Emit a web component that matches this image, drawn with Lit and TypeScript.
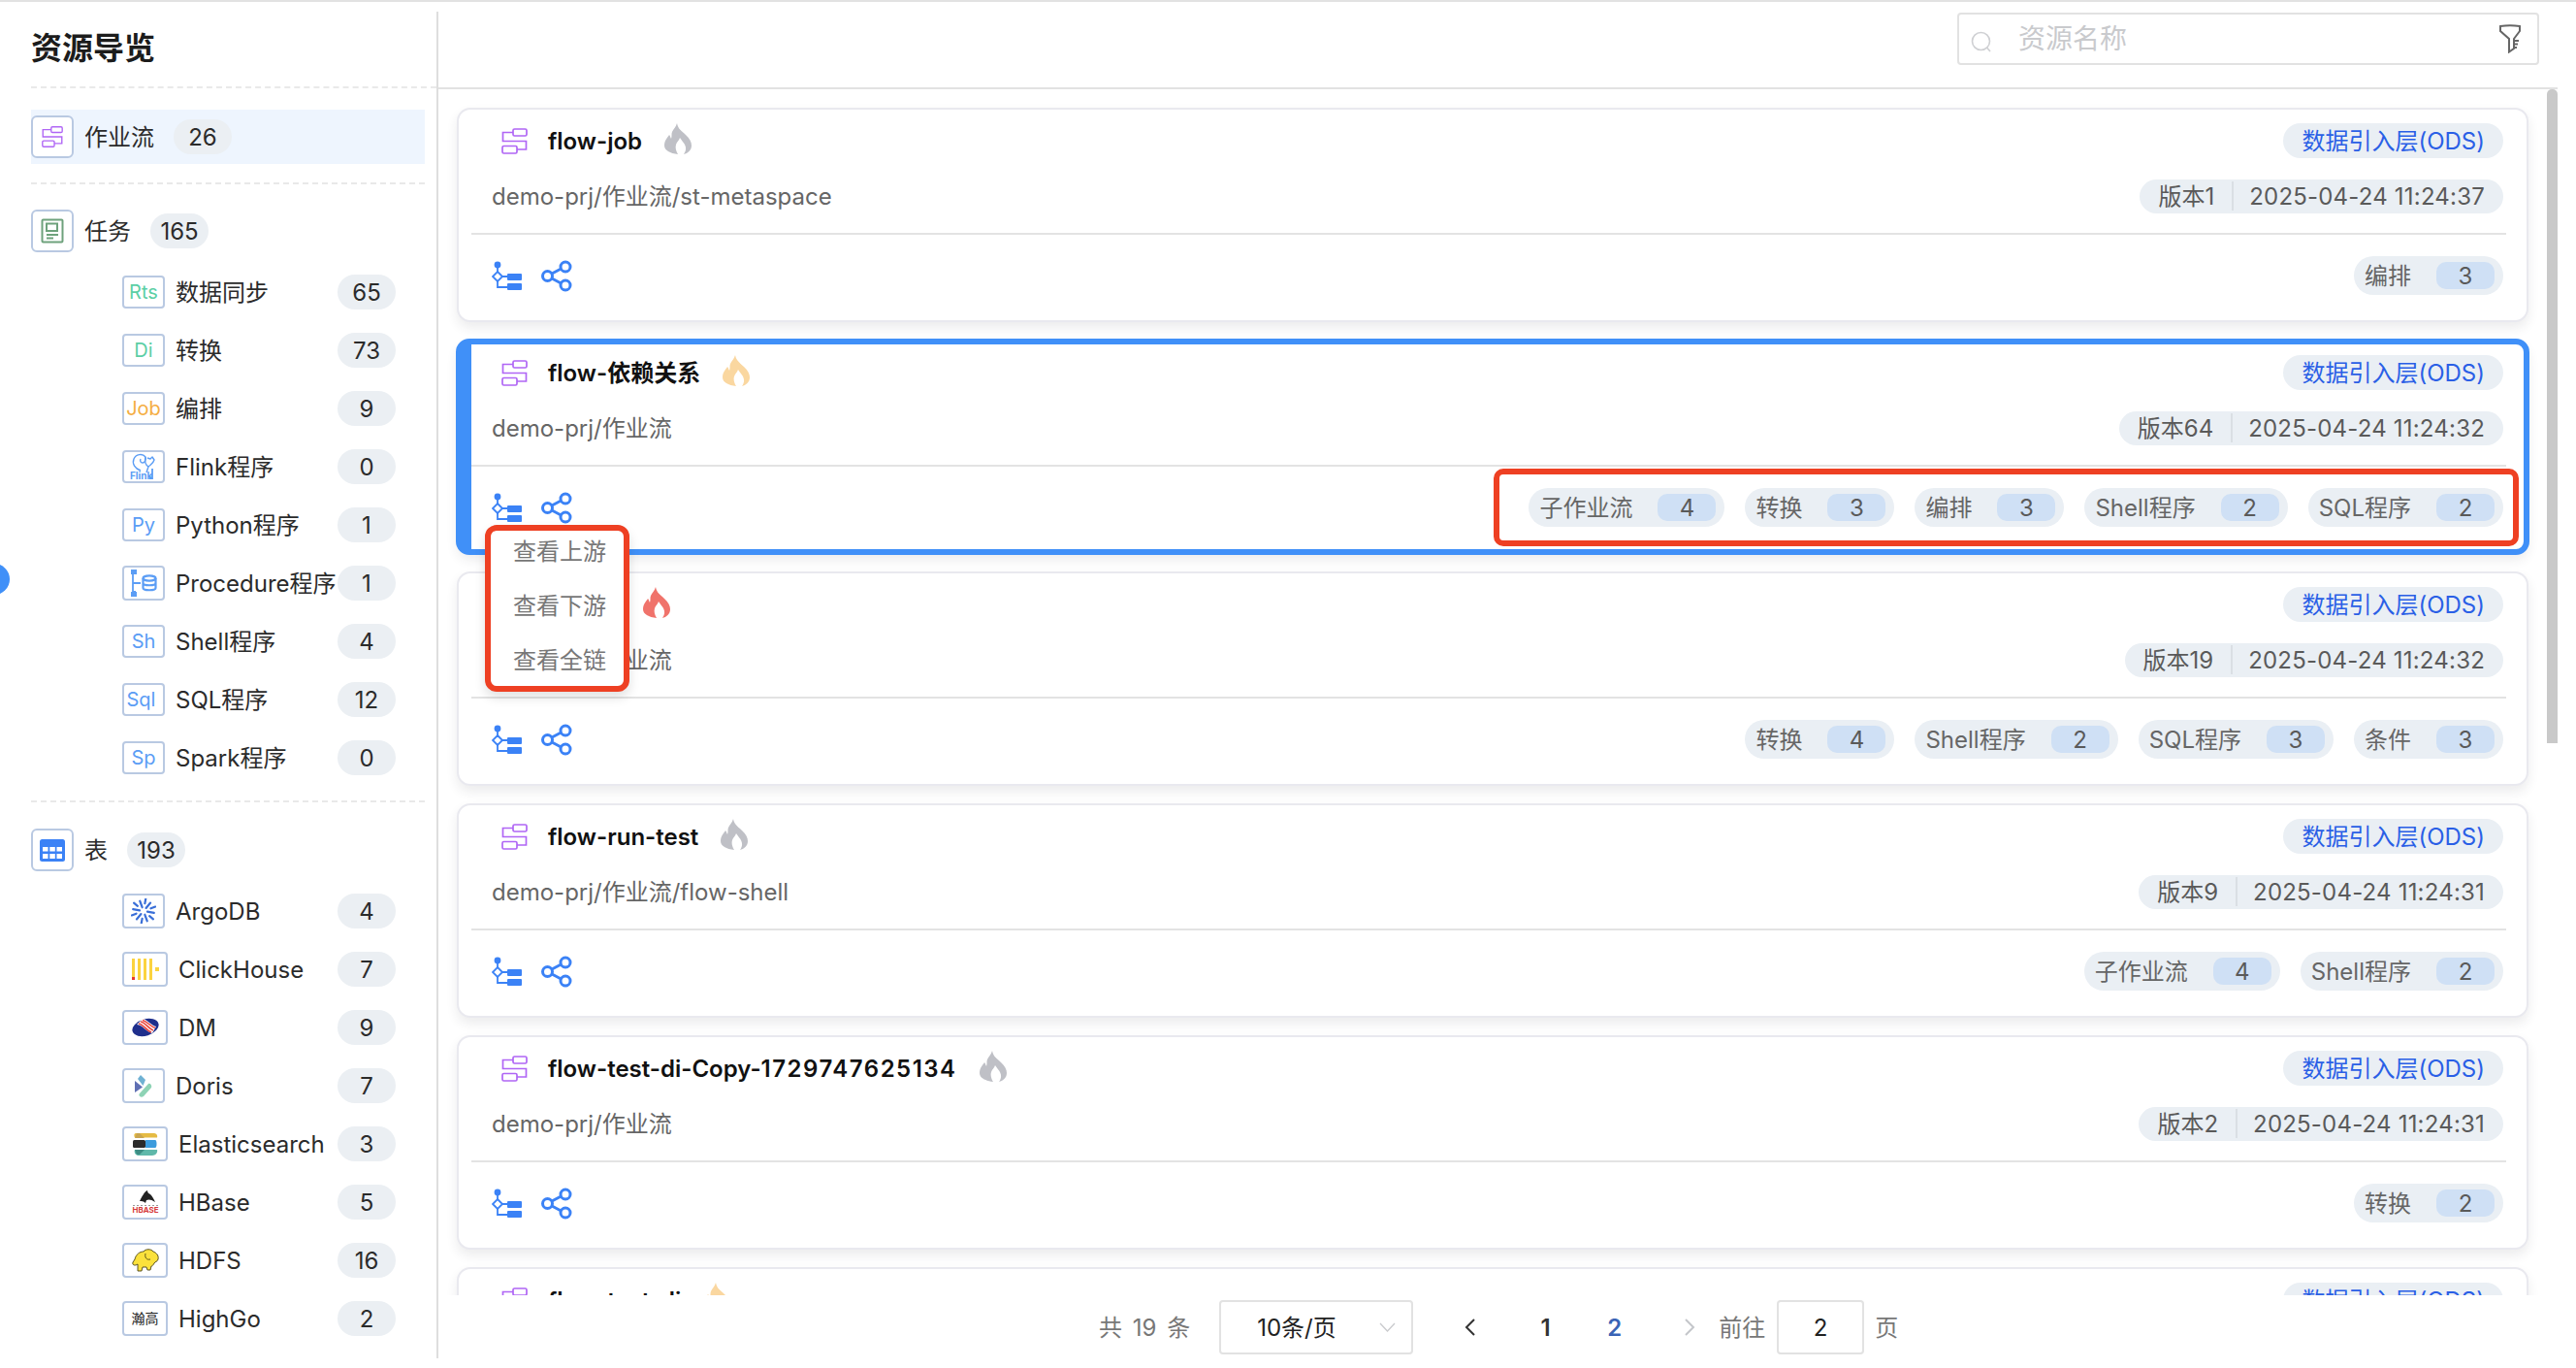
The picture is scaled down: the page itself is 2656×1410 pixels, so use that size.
import { LitElement, html, css, svg } from "lit";
import { customElement } from "lit/decorators.js";

const flowIcon = (s: number) => html`<svg class="flow" width=${s} height=${s} viewBox="0 0 27 27" fill="none" stroke="#b066f5" stroke-width="1.700"><rect x="12" y="1" width="14" height="7" rx="1.500"/><path d="M12 4.500H1.500V13.500H25.500V22H16"/><rect x="1" y="18.500" width="15" height="7.500" rx="1.500"/></svg>`;
const flame = (c: string) => html`<svg class="flame" width="28" height="32" viewBox="0 0 28 32"><path fill=${c} d="M13 0c1 6 5 8 9 12c4 4 6 7 6 11c0 5-4 8-8 9c2-3 3-6 1-10c-1-2-3-4-5-7c-1 3-3 4-4 7c-1 3 0 7 2 10c-8-1-14-4-14-9c0-5 3-8 5-11c1 1 1 2 2 4c1-3 0-5 1-7c1-3 4-5 5-9z"/></svg>`;
const tree = html`<svg width="31" height="30" viewBox="0 0 31 30" fill="none" stroke="#3b82f6" stroke-width="1.800"><circle cx="6" cy="4" r="3.400" fill="#3b82f6" stroke="none"/><path d="M6 6V11M6 21V27H16M11 16H16"/><path d="M6 11L11 16L6 21L1 16Z"/><rect x="16" y="13" width="15" height="7" rx="1" fill="#3b82f6" stroke="none"/><rect x="16" y="23" width="15" height="7" rx="1" fill="#3b82f6" stroke="none"/></svg>`;
const share = html`<svg width="32" height="33" viewBox="0 0 32 33" fill="none" stroke="#3b82f6" stroke-width="3"><circle cx="25" cy="7" r="5"/><circle cx="6.500" cy="16.500" r="5"/><circle cx="25" cy="26" r="5"/><path d="M11 14L20.500 9M11 19L20.500 24"/></svg>`;

const boxIcons: Record<string, unknown> = {
  flow: flowIcon(22),
  task: html`<svg width="24" height="26" viewBox="0 0 24 26" fill="none" stroke="#6ea27c" stroke-width="2"><rect x="1.500" y="1.500" width="21" height="23" rx="1"/><rect x="6" y="5.500" width="11" height="7.500"/><path d="M6 17H18M6 20.500H13"/></svg>`,
  table: html`<svg width="26" height="23" viewBox="0 0 26 23"><rect width="26" height="23" rx="2.500" fill="#3b82f6"/><g fill="#fff"><rect x="3" y="8" width="5.500" height="4.500"/><rect x="10.300" y="8" width="5.500" height="4.500"/><rect x="17.500" y="8" width="5.500" height="4.500"/><rect x="3" y="15" width="5.500" height="5"/><rect x="10.300" y="15" width="5.500" height="5"/><rect x="17.500" y="15" width="5.500" height="5"/></g></svg>`,
  flink: html`<svg width="36" height="30" viewBox="0 0 36 30"><g fill="none" stroke="#5b9df5" stroke-width="1.400" stroke-linejoin="round"><path d="M15 19C9 17 6 12 8 7C10 2 17 1 20 5C21 8 19 11 17 11C15 11 14 9 15 7"/><path d="M20 5C19 9 20 13 23 15L21 21M23 15C25 13 28 12 29 8L27 5L25 7L22 6"/></g><text x="4" y="28" font-size="10" font-weight="700" fill="#5b9df5" font-family="Inter">Flink</text><path d="M27 17V27H24" fill="none" stroke="#5b9df5" stroke-width="1.800"/></svg>`,
  proc: html`<svg width="28" height="28" viewBox="0 0 28 28" fill="#5b9df5"><rect x="1" y="0" width="6" height="5"/><rect x="1" y="23" width="6" height="5"/><path d="M3 5V23H6M3 14H11" fill="none" stroke="#5b9df5" stroke-width="1.800"/><g fill="none" stroke="#5b9df5" stroke-width="2.200"><ellipse cx="20" cy="9" rx="6.500" ry="2.600"/><path d="M13.500 9V19C13.500 22 26.500 22 26.500 19V9M13.500 14C13.500 17 26.500 17 26.500 14"/></g></svg>`,
  argo: html`<svg width="26" height="26" viewBox="0 0 26 26" stroke="#3a6fd8" stroke-width="2.200" stroke-linecap="round">${[10, 40, 70, 100, 130, 160, 190, 220, 250, 280, 310, 340].map((a, i) => {
    const r = (a * Math.PI) / 180;
    const o = i % 2 ? 13 : 11;
    const n = i % 2 ? 8 : 4;
    return svg`<line x1=${13 + Math.cos(r) * n} y1=${13 + Math.sin(r) * n} x2=${13 + Math.cos(r) * o} y2=${13 + Math.sin(r) * o}/>`;
  })}</svg>`,
  click: html`<svg width="30" height="23" viewBox="0 0 30 23" fill="#fbd33f"><rect x="1" width="3" height="22"/><rect x="7" width="3" height="22"/><rect x="13" width="3" height="22"/><rect x="19" width="3" height="22"/><rect x="25" y="9" width="4" height="4"/><rect x="1" y="19" width="3" height="3" fill="#e8382c"/></svg>`,
  dm: html`<svg width="28" height="22" viewBox="0 0 28 22"><ellipse cx="14" cy="11" rx="14" ry="8.500" transform="rotate(-17 14 11)" fill="#1f2f8c"/><path d="M5 8C12 9 14 15 21 17L25 10C20 9 16 3 11 2Z" fill="#fff"/><g fill="none" stroke="#e8453c" stroke-width="1.600"><path d="M7 7C12 8 15 14 20 16M9 5C14 6 17 12 22 14M11 3.500C16 5 19 10 24 11.500"/></g></svg>`,
  doris: html`<svg width="18" height="23" viewBox="0 0 18 23"><path d="M0 6L8 12.500L0 18Z" fill="#5f6fb3"/><path d="M3 4L6 0L11 5L8.500 11Z" fill="#6fb1d3"/><path d="M5 19L14 9C16 8 18 11 17 13L9 22C6 24 3 21 5 19Z" fill="#8ed3b5"/></svg>`,
  es: html`<svg width="26" height="24" viewBox="0 0 26 24"><path d="M3 1H21A3.500 3.500 0 0 1 25 5.500H2C1 4 1 1 3 1Z" fill="#e5bb44"/><path d="M2 6H12L7 1H4Z" fill="#c9a54f"/><rect y="8" width="13" height="8" rx="1.500" fill="#2b2b2b"/><path d="M13 8H23C25 8 25 16 23 16H13Z" fill="#3b9bdc"/><path d="M2 18H25C26 21 23 24 20 24H5C2 23 1 20 2 18Z" fill="#5fb8aa"/><path d="M2 18H12L7 23H4Z" fill="#3e8d84"/></svg>`,
  hbase: html`<svg width="28" height="24" viewBox="0 0 28 24"><path d="M8 11C10 7 13 1 16 0C16 2 17 3 19 4C21 6 22 8 24 12C20 9 17 9 15 10L14 13C12 11 10 11 8 11Z" fill="#222"/><path d="M1 15.500H27" stroke="#999" stroke-width="1" stroke-dasharray="2 2"/><text x="14" y="23" text-anchor="middle" font-size="7.500" font-weight="700" fill="#d63a3a" font-family="Inter" textLength="27" lengthAdjust="spacingAndGlyphs">HBASE</text></svg>`,
  hdfs: html`<svg width="28" height="24" viewBox="0 0 28 24"><path d="M3 11C4 6 8 3 12 3C14 0 20 0 22 3C25 4 28 7 27 11C26 14 24 13 23 15C22 17 21 18 20 18L19 22H16L15 19H11L10 23H6L6 16C3 18 0 17 1 14Z" fill="#fbe13c" stroke="#4a4314" stroke-width=".9"/><path d="M14 5C13 9 15 12 19 11" fill="none" stroke="#4a4314" stroke-width=".9"/></svg>`,
  high: html`<span class="hg">瀚高</span>`,
};

const children1 = [
  ["Rts", "数据同步", 65, "#5ccfa5"], ["Di", "转换", 73, "#5ccfa5"], ["Job", "编排", 9, "#f5ae42"],
  ["@flink", "Flink程序", 0, ""], ["Py", "Python程序", 1, "#5b9df5"], ["@proc", "Procedure程序", 1, ""],
  ["Sh", "Shell程序", 4, "#5b9df5"], ["Sql", "SQL程序", 12, "#5b9df5"], ["Sp", "Spark程序", 0, "#5b9df5"],
] as const;
const children2 = [
  ["argo", "ArgoDB", 4, ""], ["click", "ClickHouse", 7, "wide"], ["dm", "DM", 9, "wide"], ["doris", "Doris", 7, ""],
  ["es", "Elasticsearch", 3, "wide"], ["hbase", "HBase", 5, "wide"], ["hdfs", "HDFS", 16, "wide"], ["high", "HighGo", 2, "wide"],
] as const;

const cards = [
  { t: "flow-job", n: "", f: "#bfc0c6", p: "demo-prj/作业流/st-metaspace", v: "版本1", d: "2025-04-24 11:24:37", c: [["编排", 3]] },
  { t: "flow-依赖关系", n: "", f: "#fad7a0", p: "demo-prj/作业流", v: "版本64", d: "2025-04-24 11:24:32", c: [["子作业流", 4], ["转换", 3], ["编排", 3], ["Shell程序", 2], ["SQL程序", 2]], active: true },
  { t: "flow-a", n: "", f: "#f0736b", p: "demo-prj/作业流", v: "版本19", d: "2025-04-24 11:24:32", c: [["转换", 4], ["Shell程序", 2], ["SQL程序", 3], ["条件", 3]] },
  { t: "flow-run-test", n: "", f: "#bfc0c6", p: "demo-prj/作业流/flow-shell", v: "版本9", d: "2025-04-24 11:24:31", c: [["子作业流", 4], ["Shell程序", 2]] },
  { t: "flow-test-di-Copy-", n: "1729747625134", f: "#bfc0c6", p: "demo-prj/作业流", v: "版本2", d: "2025-04-24 11:24:31", c: [["转换", 2]] },
  { t: "flow-test-di", n: "", f: "#fad7a0", p: "demo-prj/作业流", v: "版本1", d: "2025-04-24 11:24:31", c: [["转换", 2]] },
];

@customElement("app-root")
export class AppRoot extends LitElement {
  static styles = css`
    :host { display: block; font-family: Inter, "Noto Sans CJK SC", sans-serif; font-size: 24px; line-height: 31px; color: #2b2b2b; background: #fff; }
    * { box-sizing: border-box; }
    .app { position: relative; display: flex; width: 2656px; height: 1410px; border-top: 2px solid #e2e2e2; overflow: hidden; }
    .dot { position: absolute; left: -22px; top: 579px; width: 32px; height: 32px; border-radius: 50%; background: #4090f8; }
    .side { width: 452px; height: 1388px; margin-top: 10px; flex: none; border-right: 2px solid #dedede; padding: 0 12px 0 32px; }
    .title { height: 79px; margin-right: -12px; padding-top: 16px; font-size: 32px; font-weight: 700; line-height: 44px; color: #1c1c1c; border-bottom: 2px dashed #e9e9e9; }
    .sel { display: flex; align-items: center; height: 56px; margin-top: 22px; background: #eef5fe; }
    .sep { border-top: 2px dashed #e9e9e9; }
    .sep.a { margin-top: 19px; }
    .sep.b { margin-top: 14px; }
    .head { display: flex; align-items: center; height: 44px; }
    .head.a { margin-top: 26px; }
    .head.b { margin-top: 27px; }
    .kids { margin-top: 11px; }
    .row { display: flex; align-items: center; height: 60px; padding: 0 30px 0 94px; }
    .ib { flex: none; display: flex; align-items: center; justify-content: center; width: 44px; height: 44px; border: 2px solid #b9c9e2; border-radius: 6px; background: #fff; font-size: 20px; overflow: hidden; }
    .row .ib { height: 34px; border-radius: 4px; }
    .row .ib.tall { height: 36px; }
    .row .ib.wide { width: 47px; }
    .row .ib.Sql { padding-right: 5px; }
    .label { margin-left: 11px; white-space: nowrap; }
    .num { flex: none; display: flex; align-items: center; justify-content: center; width: 60px; height: 36px; border-radius: 18px; background: #ebeff3; }
    .head .num, .sel .num { margin-left: 20px; }
    .row .num { margin-left: auto; }
    .hg { font-size: 14px; color: #222; line-height: 1; white-space: nowrap; }
    .main { position: relative; flex: none; width: 2185px; display: flex; flex-direction: column; }
    .top { flex: none; height: 90px; padding: 11px 19px 0 0; display: flex; justify-content: flex-end; border-bottom: 2px solid #e2e2e2; }
    .search { display: flex; align-items: center; width: 600px; height: 54px; padding: 0 16px 0 12px; border: 2px solid #e2e2e2; border-radius: 4px; }
    .search .mag { margin-top: 5px; }
    .ph { flex: 1; margin-left: 27px; font-size: 28px; color: #c9cacd; }
    .list { position: relative; flex: none; height: 1243px; overflow: hidden; padding: 19px 0 0 19px; display: flex; flex-direction: column; gap: 18px; }
    .thumb { position: absolute; right: 0; top: 90px; width: 11px; height: 674px; border-radius: 5px 5px 0 0; background: #c9c9c9; }
    .card { position: relative; flex: none; width: 2136px; height: 221px; border: 2px solid #e9e9ef; border-radius: 14px; padding: 14px 24px 0 34px; background: #fff; box-shadow: 0 6px 12px rgba(40, 44, 60, 0.09); }
    .card.on { z-index: 2; }
    .card.on::after { content: ""; position: absolute; inset: -3px; border: 6px solid #4090f8; border-left-width: 16px; border-radius: 14px; pointer-events: none; }
    .r1, .r2 { display: flex; align-items: center; justify-content: space-between; }
    .r1 { height: 36px; }
    .r2 { height: 36px; margin-top: 21px; color: #666; }
    .name { display: flex; align-items: center; padding-left: 10px; font-weight: 600; color: #111; }
    .name > span { margin: 0 23px 0 21px; }
    .digits { letter-spacing: 1.5px; }
    .flame { margin-top: -4px; }
    .tag { display: flex; align-items: center; height: 36px; padding: 0 19px; border-radius: 18px; background: #eaeff4; white-space: nowrap; }
    .ods { color: #2a5fe6; }
    .ver { height: 35px; color: #5a5a5a; }
    .ver i { width: 2px; height: 30px; margin: 0 16px 0 18px; background: #dadfe4; }
    .date { letter-spacing: 0.2px; }
    .rule { height: 2px; margin: 20px -3px 0 -21px; background: #e3e3e3; }
    .foot { display: flex; align-items: center; justify-content: space-between; height: 84px; }
    .tools { display: flex; align-items: center; gap: 20px; }
    .chips { display: flex; gap: 21px; }
    .chip { display: flex; align-items: center; height: 40px; padding: 0 9px 0 11px; border-radius: 20px; background: #eaeff4; color: #666; white-space: nowrap; }
    .chip b { display: flex; align-items: center; justify-content: center; width: 60px; height: 28px; margin-left: 26px; border-radius: 10px; background: #cfe0f5; font-weight: 400; color: #5a5a5a; }
    .mark { position: absolute; left: 1067px; top: 131px; width: 1057px; height: 80px; border: 6px solid #ee4023; border-radius: 10px; z-index: 3; }
    .menu { position: absolute; left: 27px; top: 189px; width: 149px; height: 172px; z-index: 4; display: flex; flex-direction: column; justify-content: center; padding: 0 0 4px 23px; background: #fff; border: 6px solid #ee4023; border-radius: 12px; color: #777; box-shadow: 0 6px 12px rgba(0, 0, 0, 0.12); }
    .menu div { flex: none; height: 56px; line-height: 56px; white-space: nowrap; }
    .pager { display: flex; align-items: center; height: 56px; margin-top: 5px; padding-left: 681px; color: #777; white-space: pre; }
    .total { word-spacing: 4px; }
    .select { display: flex; align-items: center; width: 200px; height: 56px; margin-left: 30px; padding: 0 16px 0 37px; border: 2px solid #e2e2e2; border-radius: 4px; color: #222; }
    .select span { flex: 1; }
    .arrow { display: flex; align-items: center; justify-content: center; width: 42px; }
    .arrow.prev { margin: 0 21px 0 38px; }
    .arrow.next { margin: 0 9px 0 21px; }
    .pg { width: 71px; text-align: center; font-weight: 600; color: #333; }
    .pg.cur { color: #3a63b5; }
    .go { display: flex; align-items: center; justify-content: center; width: 90px; height: 56px; margin: 0 11px 0 12px; border: 2px solid #e2e2e2; border-radius: 4px; color: #222; }
  `;

  private box(k: string, cls = "") {
    return html`<div class="ib ${cls}">${boxIcons[k]}</div>`;
  }

  private card(c: (typeof cards)[number]) {
    return html`<div class="card ${c.active ? "on" : ""}">
      <div class="r1"><div class="name">${flowIcon(27)}<span>${c.t}<span class="digits">${c.n}</span></span>${flame(c.f)}</div><div class="tag ods">数据引入层(ODS)</div></div>
      <div class="r2"><div>${c.p}</div><div class="tag ver">${c.v}<i></i><span class="date">${c.d}</span></div></div>
      <div class="rule"></div>
      <div class="foot"><div class="tools">${tree}${share}</div><div class="chips">${c.c.map((x) => html`<div class="chip">${x[0]}<b>${x[1]}</b></div>`)}</div></div>
      ${c.active ? html`<div class="mark"></div><div class="menu"><div>查看上游</div><div>查看下游</div><div>查看全链</div></div>` : ""}
    </div>`;
  }

  render() {
    return html`<div class="app">
      <div class="dot"></div>
      <aside class="side">
        <div class="title">资源导览</div>
        <div class="sel">${this.box("flow")}<span class="label">作业流</span><span class="num">26</span></div>
        <div class="sep a"></div>
        <div class="head a">${this.box("task")}<span class="label">任务</span><span class="num">165</span></div>
        <div class="kids">${children1.map((k) => {
          const icon = String(k[0]);
          const isSvg = icon.startsWith("@");
          const key = icon.slice(1);
          return html`<div class="row">
            ${isSvg
              ? this.box(key, key === "proc" ? "tall" : "")
              : html`<div class="ib ${icon}" style="color:${k[3]}">${icon}</div>`}
            <span class="label">${k[1]}</span><span class="num">${k[2]}</span>
          </div>`;
        })}</div>
        <div class="sep b"></div>
        <div class="head b">${this.box("table")}<span class="label">表</span><span class="num">193</span></div>
        <div class="kids">${children2.map((k) => html`<div class="row">${this.box(k[0], `tall ${k[3]}`)}<span class="label">${k[1]}</span><span class="num">${k[2]}</span></div>`)}</div>
      </aside>
      <main class="main">
        <div class="top"><div class="search">
          <svg class="mag" width="22" height="22" viewBox="0 0 22 22" fill="none" stroke="#cfd0d3" stroke-width="1.600"><circle cx="10.500" cy="10.500" r="9"/><path d="M16.500 17L20 21"/></svg>
          <span class="ph">资源名称</span>
          <svg width="24" height="30" viewBox="0 0 24 30" fill="none" stroke="#666" stroke-width="2"><path d="M2 2C8 1 16 1 22 2V7L16 15V25L11 28.500V15L2 7Z"/><path d="M16 17H21M16 20.500H20M16 24H19"/></svg>
        </div></div>
        <div class="list">${cards.map((c) => this.card(c))}</div>
        <div class="thumb"></div>
        <div class="pager">
          <span class="total">共 19 条</span>
          <div class="select"><span>10条/页</span><svg width="17" height="10" viewBox="0 0 17 10" fill="none" stroke="#c9cacd" stroke-width="1.300"><path d="M1 1L8.500 9L16 1"/></svg></div>
          <div class="arrow prev"><svg width="12" height="20" viewBox="0 0 12 20" fill="none" stroke="#333" stroke-width="2"><path d="M10 2L2 10L10 18"/></svg></div>
          <div class="pg">1</div><div class="pg cur">2</div>
          <div class="arrow next"><svg width="12" height="20" viewBox="0 0 12 20" fill="none" stroke="#c4c6ca" stroke-width="2"><path d="M2 2L10 10L2 18"/></svg></div>
          <span>前往</span><div class="go">2</div><span>页</span>
        </div>
      </main>
    </div>`;
  }
}
